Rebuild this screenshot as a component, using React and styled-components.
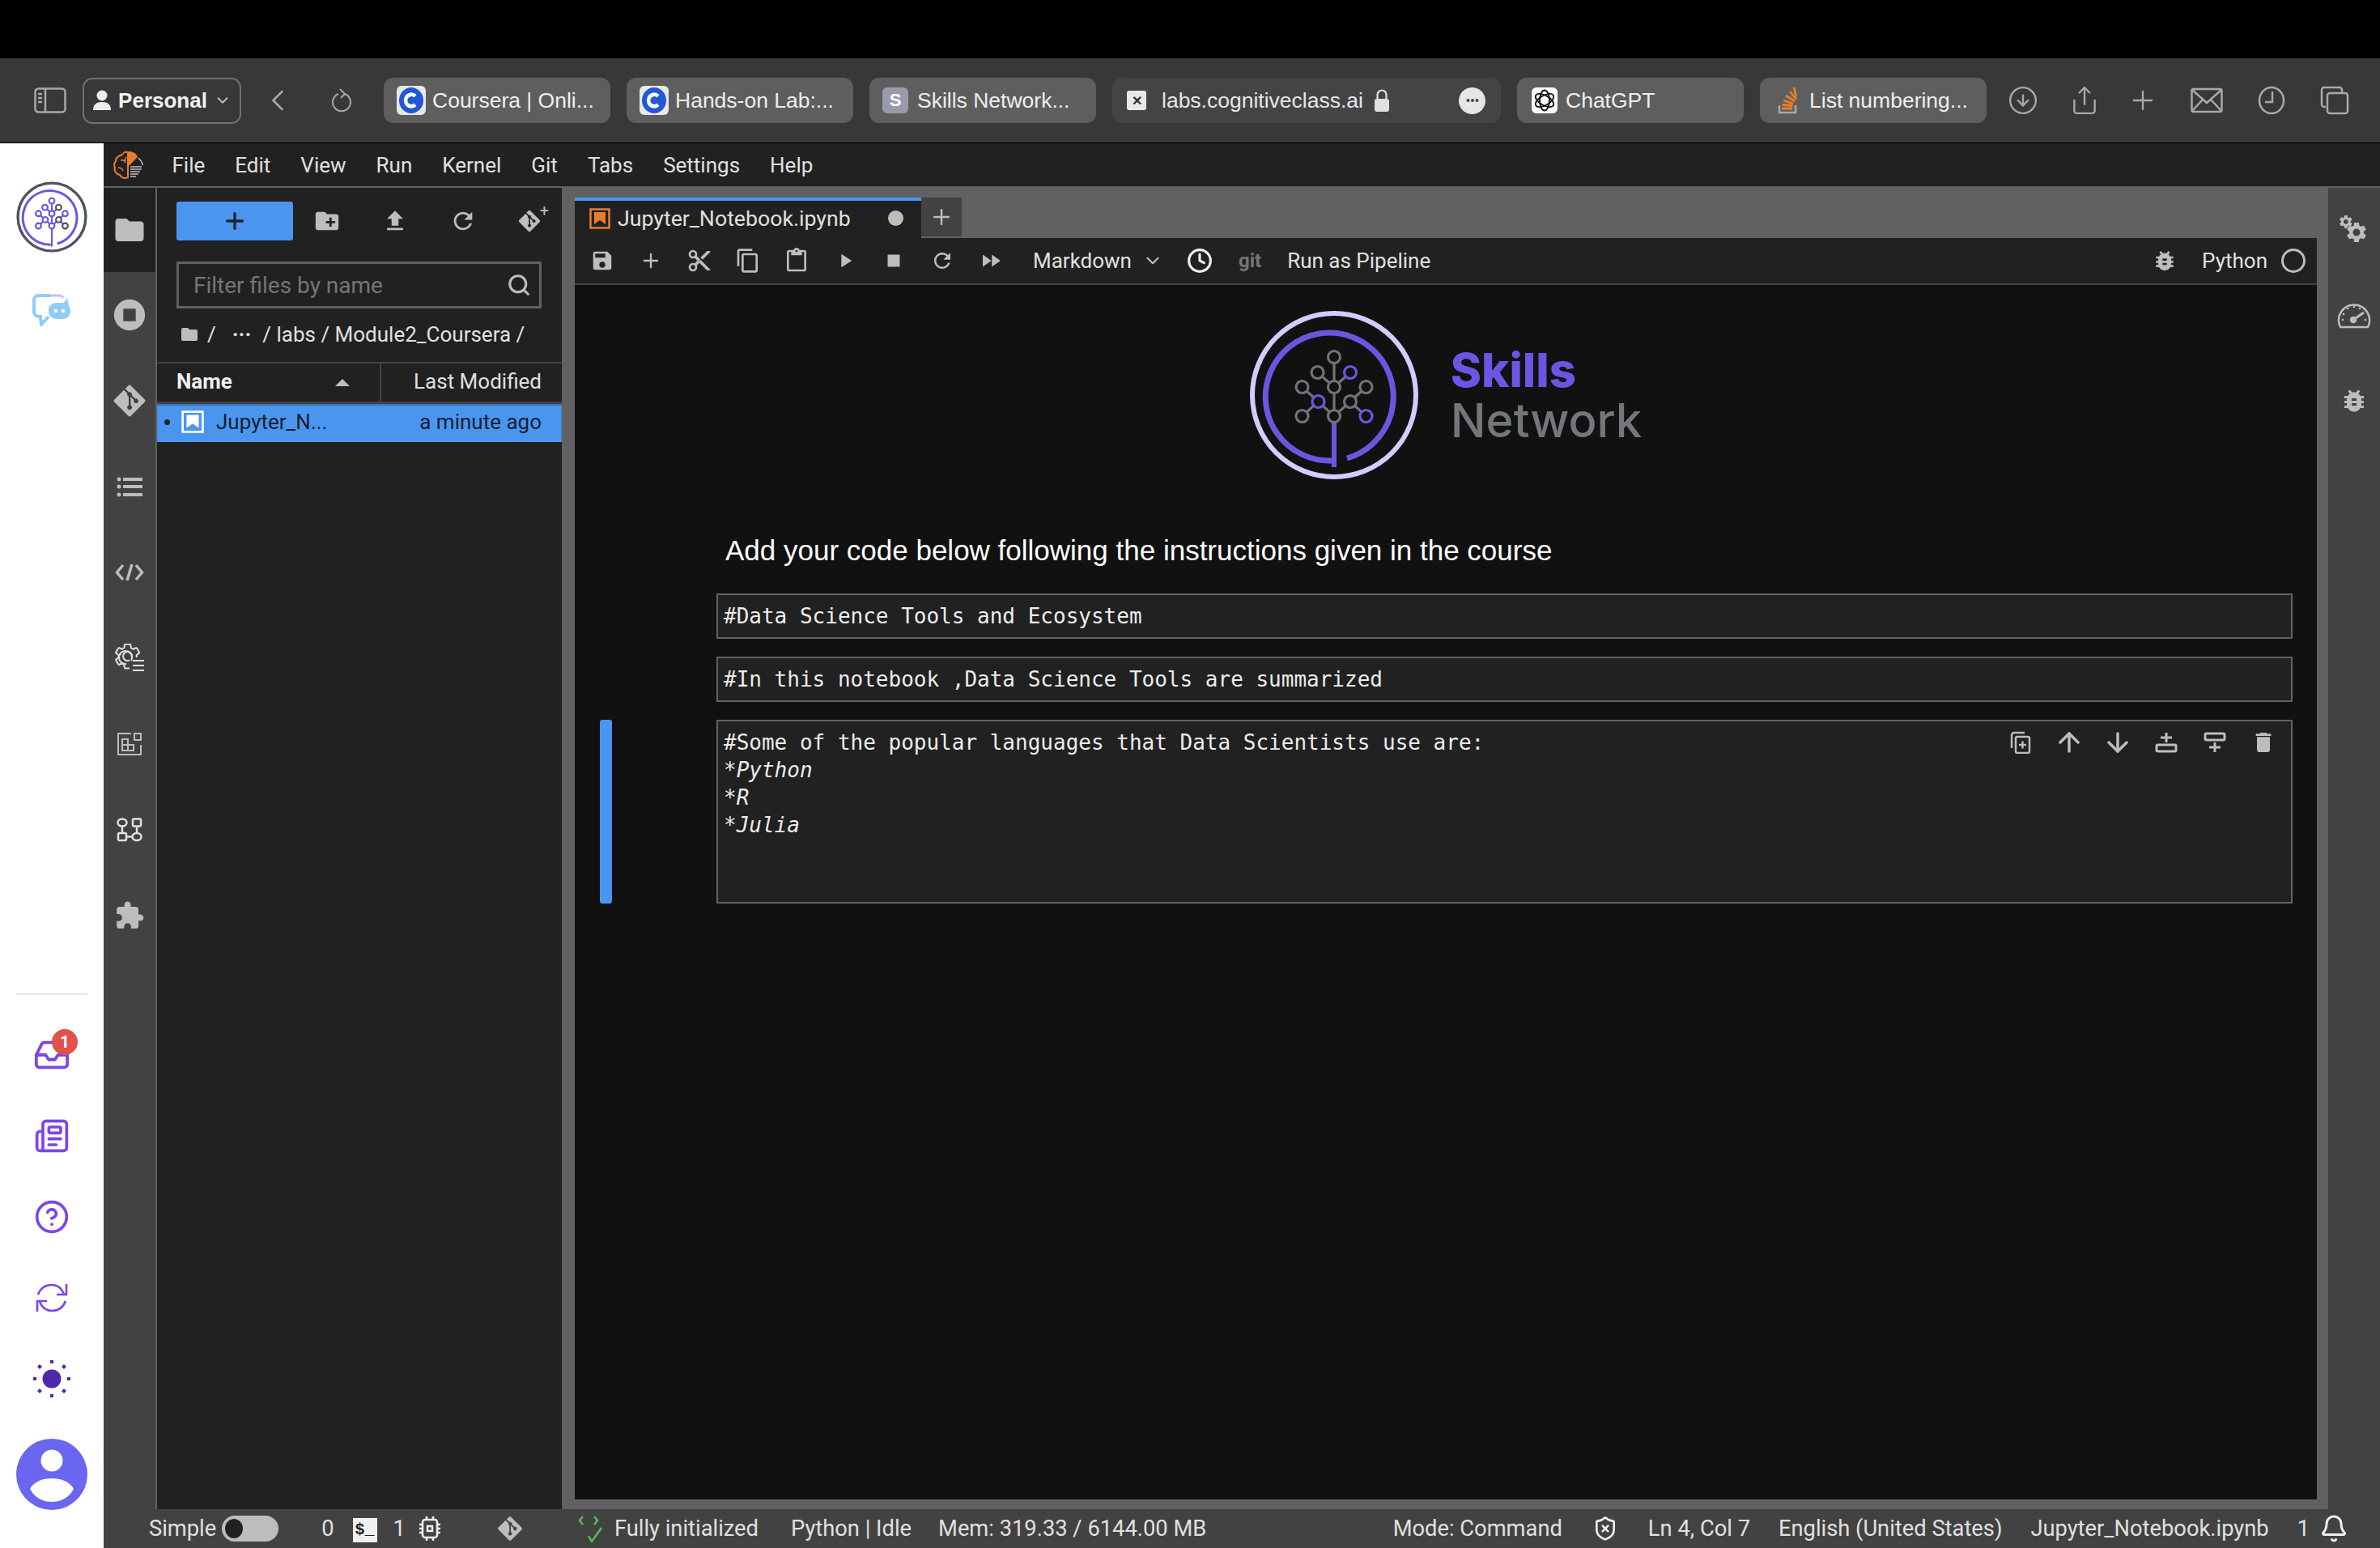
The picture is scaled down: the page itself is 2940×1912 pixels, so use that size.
import React from "react";
import styled, { createGlobalStyle } from "styled-components";
import { FaGitAlt } from "react-icons/fa";
import {
  ArrowDown,
  ArrowUp,
  Bell,
  CircleArrowDown,
  CircleHelp,
  Clock,
  Inbox,
  Newspaper,
  Plus,
  Search,
  Share,
  ShieldX,
  ChevronLeft,
  ChevronDown,
} from "lucide-react";

const LAB_FONT = `Roboto, "Noto Sans", sans-serif`;

const Mat = ({ d, size = 28, color = "#bdbdbd" }) => (
  <svg width={size} height={size} viewBox="0 0 24 24" fill={color}>
    <path d={d} />
  </svg>
);

const paths = {
  folder: "M10 4H4c-1.1 0-1.99.9-1.99 2L2 18c0 1.1.9 2 2 2h16c1.1 0 2-.9 2-2V8c0-1.1-.9-2-2-2h-8l-2-2z",
  newFolder: "M20 6h-8l-2-2H4c-1.11 0-1.99.89-1.99 2L2 18c0 1.11.89 2 2 2h16c1.11 0 2-.89 2-2V8c0-1.11-.89-2-2-2zm-1 8h-3v3h-2v-3h-3v-2h3V9h2v3h3v2z",
  upload: "M9 16h6v-6h4l-7-7-7 7h4zm-4 2h14v2H5z",
  refresh: "M17.65 6.35C16.2 4.9 14.21 4 12 4c-4.42 0-7.99 3.58-7.99 8s3.57 8 7.99 8c3.73 0 6.84-2.55 7.73-6h-2.08c-.82 2.33-3.04 4-5.65 4-3.31 0-6-2.69-6-6s2.69-6 6-6c1.66 0 3.14.69 4.22 1.78L13 11h7V4l-2.35 2.35z",
  save: "M17 3H5c-1.11 0-2 .9-2 2v14c0 1.1.89 2 2 2h14c1.1 0 2-.9 2-2V7l-4-4zm-5 16c-1.66 0-3-1.34-3-3s1.34-3 3-3 3 1.34 3 3-1.34 3-3 3zm3-10H5V5h10v4z",
  cut: "M9.64 7.64c.23-.5.36-1.05.36-1.64 0-2.21-1.79-4-4-4S2 3.79 2 6s1.79 4 4 4c.59 0 1.14-.13 1.64-.36L10 12l-2.36 2.36C7.14 14.13 6.59 14 6 14c-2.21 0-4 1.79-4 4s1.79 4 4 4 4-1.79 4-4c0-.59-.13-1.14-.36-1.64L12 14l7 7h3v-1L9.64 7.64zM6 8c-1.1 0-2-.89-2-2s.9-2 2-2 2 .89 2 2-.9 2-2 2zm0 12c-1.1 0-2-.89-2-2s.9-2 2-2 2 .89 2 2-.9 2-2 2zm6-7.5c-.28 0-.5-.22-.5-.5s.22-.5.5-.5.5.22.5.5-.22.5-.5.5zM19 3l-6 6 2 2 7-7V3h-3z",
  copy: "M16 1H4c-1.1 0-2 .9-2 2v14h2V3h12V1zm3 4H8c-1.1 0-2 .9-2 2v14c0 1.1.9 2 2 2h11c1.1 0 2-.9 2-2V7c0-1.1-.9-2-2-2zm0 16H8V7h11v14z",
  paste: "M19 2h-4.18C14.4.84 13.3 0 12 0c-1.3 0-2.4.84-2.82 2H5c-1.1 0-2 .9-2 2v16c0 1.1.9 2 2 2h14c1.1 0 2-.9 2-2V4c0-1.1-.9-2-2-2zm-7 0c.55 0 1 .45 1 1s-.45 1-1 1-1-.45-1-1 .45-1 1-1zm7 18H5V4h2v3h10V4h2v16z",
  play: "M8 5v14l11-7z",
  stop: "M6 6h12v12H6z",
  forward: "M4 18l8.5-6L4 6v12zm9-12v12l8.5-6L13 6z",
  extension: "M20.5 11H19V7c0-1.1-.9-2-2-2h-4V3.5C13 2.12 11.88 1 10.5 1S8 2.12 8 3.5V5H4c-1.1 0-1.99.9-1.99 2v3.8H3.5c1.49 0 2.7 1.21 2.7 2.7s-1.21 2.7-2.7 2.7H2V20c0 1.1.9 2 2 2h3.8v-1.5c0-1.49 1.21-2.7 2.7-2.7 1.49 0 2.7 1.21 2.7 2.7V22H17c1.1 0 2-.9 2-2v-4h1.5c1.38 0 2.5-1.12 2.5-2.5S21.88 11 20.5 11z",
  bug: "M20 8h-2.81c-.45-.78-1.07-1.45-1.82-1.96L17 4.41 15.59 3l-2.17 2.17C12.96 5.06 12.49 5 12 5c-.49 0-.96.06-1.41.17L8.41 3 7 4.41l1.62 1.63C7.88 6.55 7.26 7.22 6.81 8H4v2h2.09c-.05.33-.09.66-.09 1v1H4v2h2v1c0 .34.04.67.09 1H4v2h2.81c1.04 1.79 2.97 3 5.19 3s4.15-1.21 5.19-3H20v-2h-2.09c.05-.33.09-.66.09-1v-1h2v-2h-2v-1c0-.34-.04-.67-.09-1H20V8zm-6 8h-4v-2h4v2zm0-4h-4v-2h4v2z",
  stopCircle: "M12 2a10 10 0 1 0 0 20 10 10 0 0 0 0-20zm4 14H8V8h8v8z",
  trash: "M6 19c0 1.1.9 2 2 2h8c1.1 0 2-.9 2-2V7H6v12zM19 4h-3.5l-1-1h-5l-1 1H5v2h14V4z",
  gear: "M19.14 12.94c.04-.3.06-.61.06-.94 0-.32-.02-.64-.07-.94l2.03-1.58c.18-.14.23-.41.12-.61l-1.92-3.32c-.12-.22-.37-.29-.59-.22l-2.39.96c-.5-.38-1.03-.7-1.62-.94l-.36-2.54c-.04-.24-.24-.41-.48-.41h-3.84c-.24 0-.43.17-.47.41l-.36 2.54c-.59.24-1.13.57-1.62.94l-2.39-.96c-.22-.08-.47 0-.59.22L2.74 8.87c-.12.21-.08.47.12.61l2.03 1.58c-.05.3-.09.63-.09.94s.02.64.07.94l-2.03 1.58c-.18.14-.23.41-.12.61l1.92 3.32c.12.22.37.29.59.22l2.39-.96c.5.38 1.03.7 1.62.94l.36 2.54c.05.24.24.41.48.41h3.84c.24 0 .44-.17.47-.41l.36-2.54c.59-.24 1.13-.56 1.62-.94l2.39.96c.22.08.47 0 .59-.22l1.92-3.32c.12-.22.07-.47-.12-.61l-2.01-1.58zM12 15.6c-1.98 0-3.6-1.62-3.6-3.6s1.62-3.6 3.6-3.6 3.6 1.62 3.6 3.6-1.62 3.6-3.6 3.6z",
};

const SidebarIcon = () => (
  <svg width="40" height="32" viewBox="0 0 40 32" fill="none" stroke="#a8a8a8" strokeWidth="2.5">
    <rect x="1.5" y="1.5" width="37" height="29" rx="4" />
    <path d="M14 2v28M5 8h5M5 13h5M5 18h5" />
  </svg>
);

const PersonIcon = () => (
  <svg width="24" height="30" viewBox="0 0 24 30" fill="#eee">
    <circle cx="12" cy="9" r="6.5" />
    <path d="M1 27c0-7 4-10 11-10s11 3 11 10z" />
  </svg>
);

const CourseraIcon = () => (
  <FaviconBox>
    <svg width="30" height="32" viewBox="0 0 30 30" preserveAspectRatio="none">
      <circle cx="15" cy="15" r="15" fill="#2257d6" />
      <path d="M20 10a7 7 0 1 0 0 10" fill="none" stroke="#fff" strokeWidth="4.5" />
    </svg>
  </FaviconBox>
);

const OpenAiKnot = () => (
  <svg width="28" height="28" viewBox="0 0 28 28" fill="none" stroke="#111" strokeWidth="1.8">
    <ellipse cx="14" cy="14" rx="6" ry="12.5" />
    <ellipse cx="14" cy="14" rx="6" ry="12.5" transform="rotate(60 14 14)" />
    <ellipse cx="14" cy="14" rx="6" ry="12.5" transform="rotate(120 14 14)" />
  </svg>
);

const StackIcon = () => (
  <svg width="24" height="34" viewBox="0 0 24 34" fill="none">
    <path d="M2 23v9h20v-9" stroke="#a9a9a9" strokeWidth="2.5" />
    <path d="M5 27h13M5.500 22.500l13 1M7 17l12 4M10 11l11 7M15 6l8 10M20 1l3 12" stroke="#e8812a" strokeWidth="2.8" />
  </svg>
);

const LockIcon = () => (
  <svg width="20" height="28" viewBox="0 0 20 28" fill="none">
    <rect x="1" y="12" width="18" height="16" rx="3" fill="#e0e0e0" />
    <path d="M4.500 13V7a5.500 5.500 0 0 1 11 0v6" stroke="#e0e0e0" strokeWidth="2.200" />
  </svg>
);

const DotsIcon = () => (
  <svg width="16" height="6" viewBox="0 0 16 6" fill="#444">
    <circle cx="2.500" cy="3" r="2" />
    <circle cx="8" cy="3" r="2" />
    <circle cx="13.500" cy="3" r="2" />
  </svg>
);

const MailIcon = () => (
  <svg width="40" height="32" viewBox="0 0 40 32" fill="none" stroke="#a8a8a8" strokeWidth="2.5">
    <rect x="1.500" y="2" width="37" height="28" rx="2" />
    <path d="M2 3l18 16L38 3M2 29l13-14M38 29L25 15" />
  </svg>
);

const TabsIcon = () => (
  <svg width="36" height="36" viewBox="0 0 36 36" fill="none" stroke="#a8a8a8" strokeWidth="2.5">
    <path d="M7 26H5a3 3 0 0 1-3-3V5a3 3 0 0 1 3-3h19a3 3 0 0 1 3 3v3" />
    <rect x="9" y="9" width="25" height="25" rx="3" />
  </svg>
);

const HistoryIcon = () => (
  <svg width="34" height="36" viewBox="0 0 34 36" fill="none" stroke="#a8a8a8" strokeWidth="2.5">
    <ellipse cx="17" cy="18" rx="15" ry="16" />
    <path d="M18 7v13H9" />
  </svg>
);

const ReloadIcon = () => (
  <svg width="26" height="32" viewBox="0 0 26 32" fill="none" stroke="#a8a8a8" strokeWidth="2">
    <path d="M17 8a11 11 0 1 1-8 0" />
    <path d="M11 2l6 6-5 5" />
  </svg>
);

const Tree = () => {
  const grey = "#6f7276";
  const violet = "#6c56e0";
  const nodes = [
    [0, -73, grey], [-20.500, -54, grey], [20, -54, violet], [-39.500, -36, grey], [0, -36, grey],
    [39.500, -36, grey], [-19.500, -18, violet], [20, -18, grey], [-39.500, 0, grey], [0, 0, grey], [39.500, 0, violet],
  ];
  return (
    <g transform="translate(104 130)" fill="none" strokeWidth="3.2">
      <path stroke={grey} d="M0-66V-8M0-36L-20.500-54M0-36L20-54M-39.500-36L-19.500-18L0 0M39.500-36L20-18L0 0M-39.500 0L-19.500-18M20-18L39.500 0" />
      <path stroke={violet} d="M0 8V63" strokeWidth="6" />
      {nodes.map(([x, y, c]) => (
        <circle key={`${x}${y}`} cx={x} cy={y} r="7.500" stroke={c} fill="#111" />
      ))}
    </g>
  );
};

const LogoMark = () => (
  <svg width="208" height="208" viewBox="0 0 208 208">
    <circle cx="104" cy="104" r="101" fill="#111" stroke="#d4ccff" strokeWidth="6" />
    <path d="M101 185A79 79 0 1 1 120 182" fill="none" stroke="#6c56e0" strokeWidth="7" />
    <Tree />
  </svg>
);

const RailLogo = () => (
  <svg width="88" height="88" viewBox="0 0 208 208">
    <circle cx="104" cy="104" r="99" fill="#fff" stroke="#4b5563" strokeWidth="8" />
    <path d="M101 185A79 79 0 1 1 120 182" fill="none" stroke="#6c56e0" strokeWidth="7" />
    <g transform="translate(104 130)" fill="none" stroke="#6c56e0" strokeWidth="5">
      <path d="M0-66V60M0-36L-20-54M0-36L20-54M-39-36L0 0M39-36L0 0M-39 0L-19-18M20-18L39 0" />
      {[[0, -73], [-20, -54], [20, -54], [-39, -36], [0, -36], [39, -36], [-19, -18], [20, -18], [-39, 0], [0, 0], [39, 0]].map(([x, y]) => (
        <circle key={`${x}${y}`} cx={x} cy={y} r="8" fill="#fff" stroke={x === 20 || (x === 39 && y === 0) ? "#4b5563" : "#6c56e0"} />
      ))}
    </g>
  </svg>
);

const BotIcon = () => (
  <svg width="48" height="40" viewBox="0 0 48 40" fill="none">
    <path d="M22 2H8a6 6 0 0 0-6 6v14a6 6 0 0 0 6 6h2l1 10 9-10" stroke="#90cdf4" strokeWidth="4" />
    <path d="M22 2h12a6 6 0 0 1 4 3" stroke="#c7c0f7" strokeWidth="3" />
    <rect x="20" y="11" width="27" height="20" rx="9" fill="#90cdf4" />
    <path d="M38 12l5-7 2 9z" fill="#90cdf4" />
    <circle cx="29" cy="21" r="2.200" fill="#fff" />
    <circle cx="38" cy="21" r="2.200" fill="#fff" />
  </svg>
);

const SyncIcon = () => (
  <svg width="40" height="38" viewBox="0 0 40 38" fill="none" stroke="#7c45ea" strokeWidth="2.600">
    <path d="M3 15C6 7 12 3 20 3c7 0 12 4 15 11" />
    <path d="M38 2v13H26" />
    <path d="M37 23c-3 8-9 12-17 12-7 0-12-4-15-11" />
    <path d="M2 36V23h12" />
  </svg>
);

const SunIcon = () => (
  <svg width="46" height="46" viewBox="0 0 46 46" fill="#5227b0">
    <circle cx="23" cy="23" r="11.500" />
    <path d="M21 0h4v4h-4zM21 42h4v4h-4zM0 21h4v4H0zM42 21h4v4h-4zM8 5l3 3-3 3-3-3zM38 5l3 3-3 3-3-3zM8 35l3 3-3 3-3-3zM38 35l3 3-3 3-3-3z" />
  </svg>
);

const AvatarIcon = () => (
  <svg width="88" height="88" viewBox="0 0 88 88">
    <circle cx="44" cy="44" r="44" fill="#6a66f0" />
    <circle cx="44" cy="27" r="13.500" fill="#fff" />
    <path d="M17 62c5-9 15-13 27-13s22 4 27 13c-5 10-15 16-27 16s-22-6-27-16z" fill="#fff" />
  </svg>
);

const JupyterLogo = () => (
  <svg width="38" height="36" viewBox="0 0 38 36">
    <path d="M18 2a7 7 0 0 0-8 4 7 7 0 0 0-7 7 7 7 0 0 0-1 8 7 7 0 0 0 6 9 7 7 0 0 0 10 3z" fill="none" stroke="#e67e32" strokeWidth="2" />
    <path d="M9 12c3-1 5 0 6 3M6 21c3 0 5 1 6 4M16 8c-2 2-2 3-1 5" fill="none" stroke="#e67e32" strokeWidth="1.500" />
    <path d="M19 1c5 0 9 2 11 7L19 19z" fill="#e67e32" />
    <path d="M21 20h14M21 23h14M21 26h12M21 29h10M21 32h7" stroke="#bdbdbd" strokeWidth="1.500" />
    <path d="M31 9c3 3 5 6 5 9" stroke="#bdbdbd" strokeWidth="1.500" fill="none" />
  </svg>
);

const NotebookIcon = ({ color, bg, size = 26 }) => (
  <svg width={size} height={size} viewBox="0 0 26 26">
    <rect x="1.500" y="1.500" width="23" height="23" fill={bg} stroke={color} strokeWidth="2.500" />
    <path d="M6 5h14v15l-7-5-7 5z" fill={color} />
  </svg>
);

const ListIcon = () => (
  <svg width="32" height="28" viewBox="0 0 32 28" fill="#bdbdbd">
    <circle cx="3" cy="5" r="2.500" /><circle cx="3" cy="14" r="2.500" /><circle cx="3" cy="24" r="2.500" />
    <path d="M8 3h24v4H8zM8 12h24v4H8zM8 22h24v4H8z" />
  </svg>
);

const CodeIcon = () => (
  <svg width="36" height="24" viewBox="0 0 36 24" fill="none" stroke="#bdbdbd" strokeWidth="3.500">
    <path d="M10 3L2.500 12 10 21M26 3l7.500 9L26 21" />
    <path d="M21 2l-6 20" />
  </svg>
);

const GearListIcon = () => (
  <svg width="38" height="36" viewBox="0 0 38 36" fill="none" stroke="#e0e0e0">
    <path d={paths.gear} transform="translate(-2 -3) scale(1.55)" strokeWidth="1.300" />
    <rect x="19" y="17" width="19" height="19" fill="#424242" stroke="none" />
    <path d="M21 21a8 8 0 1 0-6 4" strokeWidth="2" fill="none" />
    <path d="M23 21h14M23 27h14M23 33h14" strokeWidth="2.200" />
  </svg>
);

const PropertyIcon = () => (
  <svg width="32" height="30" viewBox="0 0 32 30" fill="none" stroke="#bdbdbd" strokeWidth="2">
    <path d="M18 2H2v26h28V16" />
    <rect x="22" y="2" width="8" height="8" />
    <path d="M7 9h7v7h7v7H7zM7 16h7v7" />
  </svg>
);

const GraphIcon = () => (
  <svg width="32" height="30" viewBox="0 0 32 30" fill="none" stroke="#e0e0e0" strokeWidth="2.500">
    <ellipse cx="7" cy="6" rx="5.500" ry="4.500" />
    <rect x="20" y="1.500" width="10" height="9" rx="1.500" />
    <rect x="2" y="19" width="10" height="9" rx="1.500" />
    <ellipse cx="25" cy="23.500" rx="5.500" ry="4.500" />
    <path d="M7 11v8M25 11v8M12 23.500h8" />
  </svg>
);

const GearsIcon = () => (
  <svg width="38" height="38" viewBox="0 0 38 38" fill="#bdbdbd">
    <path d={paths.gear} fillRule="evenodd" transform="translate(-1 -1) scale(.82)" />
    <path d={paths.gear} fillRule="evenodd" transform="translate(7 7) scale(1.250)" />
  </svg>
);

const GaugeIcon = () => (
  <svg width="42" height="36" viewBox="0 0 42 36" fill="none" stroke="#bdbdbd" strokeWidth="2.500">
    <path d="M4 33A19 19 0 1 1 38 33z" />
    <path d="M20 24L33 15" strokeWidth="3" />
    <circle cx="20" cy="24" r="3" fill="#bdbdbd" />
    <g fill="#bdbdbd" stroke="none">
      <circle cx="7" cy="24" r="1.300" /><circle cx="8" cy="17" r="1.300" /><circle cx="13" cy="10" r="1.300" /><circle cx="21" cy="8" r="1.300" />
      <circle cx="28" cy="10" r="1.300" /><circle cx="35" cy="24" r="1.300" />
    </g>
  </svg>
);

const CellCopyIcon = () => (
  <svg width="26" height="28" viewBox="0 0 26 28" fill="none" stroke="#bdbdbd" strokeWidth="2.500">
    <path d="M18 2H5a3 3 0 0 0-3 3v16" />
    <rect x="7" y="7" width="17" height="20" rx="2" />
    <path d="M15.500 12.500v9M11 17h9" />
  </svg>
);

const AddAboveIcon = () => (
  <svg width="28" height="26" viewBox="0 0 28 26" fill="none" stroke="#bdbdbd" strokeWidth="3">
    <path d="M14 1v12M7 7h14" />
    <rect x="2" y="16" width="24" height="8" rx="1.500" />
  </svg>
);

const AddBelowIcon = () => (
  <svg width="28" height="26" viewBox="0 0 28 26" fill="none" stroke="#bdbdbd" strokeWidth="3">
    <rect x="2" y="2" width="24" height="8" rx="1.500" />
    <path d="M14 13v12M7 19h14" />
  </svg>
);

const GitAddIcon = () => (
  <IconWithPlus>
    <FaGitAlt size={30} color="#bdbdbd" />
    <PlusMark>+</PlusMark>
  </IconWithPlus>
);

const CpuIcon = () => (
  <svg width="28" height="30" viewBox="0 0 28 30" fill="none" stroke="#eee" strokeWidth="2.500">
    <rect x="5" y="4" width="18" height="22" rx="3" />
    <rect x="11" y="12" width="6" height="6" />
    <path d="M1 10h4M1 15h4M1 20h4M23 10h4M23 15h4M23 20h4M10 0v4M18 0v4M10 26v4M18 26v4" />
  </svg>
);

const StatusCheck = () => (
  <svg width="32" height="34" viewBox="0 0 32 34" fill="none" stroke="#5cb85c" strokeWidth="2.500">
    <path d="M5 2L1 7l4 5M19 2l4 5-4 5" />
    <path d="M12 26l4 7 12-17" />
  </svg>
);

const menuItems = ["File", "Edit", "View", "Run", "Kernel", "Git", "Tabs", "Settings", "Help"];

const App = () => (
  <Page>
    <GlobalStyle />
    <TopBand />
    <BrowserBar>
      <BarIcon $width={40} $mr={20}><SidebarIcon /></BarIcon>
      <ProfileButton>
        <PersonIcon />
        <span>Personal</span>
        <ChevronDown size={22} color="#bbb" />
      </ProfileButton>
      <BarIcon $width={56} $ml={17}><ChevronLeft size={44} color="#a8a8a8" strokeWidth={1.4} /></BarIcon>
      <BarIcon $width={56} $ml={23} $mr={24}><ReloadIcon /></BarIcon>
      <BrowserTabs>
        <BrowserTab>
          <CourseraIcon />
          <span>Coursera | Onli...</span>
        </BrowserTab>
        <BrowserTab>
          <CourseraIcon />
          <span>Hands-on Lab:...</span>
        </BrowserTab>
        <BrowserTab>
          <SkillsFavicon>S</SkillsFavicon>
          <span>Skills Network...</span>
        </BrowserTab>
        <UrlTab>
          <UrlFavicon>✕</UrlFavicon>
          <UrlText>labs.cognitiveclass.ai</UrlText>
          <LockIcon />
          <MoreDot><DotsIcon /></MoreDot>
        </UrlTab>
        <BrowserTab>
          <OpenAiBox><OpenAiKnot /></OpenAiBox>
          <span>ChatGPT</span>
        </BrowserTab>
        <BrowserTab>
          <StackBox><StackIcon /></StackBox>
          <span>List numbering...</span>
        </BrowserTab>
      </BrowserTabs>
      <BarIcons>
        <BarSlot><CircleArrowDown size={38} color="#a8a8a8" strokeWidth={1.5} /></BarSlot>
        <BarSlot $ml={36}><Share size={38} color="#a8a8a8" strokeWidth={1.5} /></BarSlot>
        <BarSlot $ml={32}><Plus size={38} color="#a8a8a8" strokeWidth={1.5} /></BarSlot>
        <BarSlot $ml={39}><MailIcon /></BarSlot>
        <BarSlot $ml={40}><HistoryIcon /></BarSlot>
        <BarSlot $ml={38}><TabsIcon /></BarSlot>
      </BarIcons>
    </BrowserBar>
    <Body>
      <WhiteRail>
        <RailLogo />
        <BotSlot><BotIcon /></BotSlot>
        <RailBottom>
          <RailDivider />
          <RailSlot>
            <Inbox size={46} color="#7c45ea" strokeWidth={2} />
            <Badge>1</Badge>
          </RailSlot>
          <RailSlot><Newspaper size={44} color="#7c45ea" strokeWidth={2} /></RailSlot>
          <RailSlot><CircleHelp size={44} color="#7c45ea" strokeWidth={2} /></RailSlot>
          <RailSlot><SyncIcon /></RailSlot>
          <RailSlot><SunIcon /></RailSlot>
          <AvatarSlot><AvatarIcon /></AvatarSlot>
        </RailBottom>
      </WhiteRail>
      <Lab>
        <MenuBar>
          <LabLogo><JupyterLogo /></LabLogo>
          {menuItems.map((item) => (
            <MenuItem key={item}>{item}</MenuItem>
          ))}
        </MenuBar>
        <Middle>
          <ActivityBar>
            <ActivityItem $active $height={104}><Mat d={paths.folder} size={42} /></ActivityItem>
            <ActivityItem><Mat d={paths.stopCircle} size={46} /></ActivityItem>
            <ActivityItem><FaGitAlt size={44} color="#bdbdbd" /></ActivityItem>
            <ActivityItem><ListIcon /></ActivityItem>
            <ActivityItem><CodeIcon /></ActivityItem>
            <ActivityItem><GearListIcon /></ActivityItem>
            <ActivityItem><PropertyIcon /></ActivityItem>
            <ActivityItem><GraphIcon /></ActivityItem>
            <ActivityItem><Mat d={paths.extension} size={38} /></ActivityItem>
          </ActivityBar>
          <FilePanel>
            <FileToolbar>
              <NewButton><Plus size={32} color="#1c2530" strokeWidth={2.5} /></NewButton>
              <ToolSlot $width={84}><Mat d={paths.newFolder} size={34} /></ToolSlot>
              <ToolSlot $width={84}><Mat d={paths.upload} size={34} /></ToolSlot>
              <ToolSlot $width={84}><Mat d={paths.refresh} size={34} /></ToolSlot>
              <ToolSlot $width={80}><GitAddIcon /></ToolSlot>
            </FileToolbar>
            <FilterBox>
              <FilterText>Filter files by name</FilterText>
              <Search size={30} color="#bdbdbd" strokeWidth={2.5} />
            </FilterBox>
            <Breadcrumbs>
              <Mat d={paths.folder} size={24} />
              <span>/</span>
              <Ellipsis>···</Ellipsis>
              <span>/ labs / Module2_Coursera /</span>
            </Breadcrumbs>
            <ListHeader>
              <NameColumn>
                <span>Name</span>
                <Caret />
              </NameColumn>
              <ModifiedColumn>Last Modified</ModifiedColumn>
            </ListHeader>
            <FileRow>
              <RunDot />
              <NotebookIcon color="#fff" bg="#4a96ee" size={28} />
              <FileName>Jupyter_N...</FileName>
              <FileDate>a minute ago</FileDate>
            </FileRow>
          </FilePanel>
          <MainArea>
            <TabStrip>
              <NotebookTab>
                <NotebookIcon color="#e67e32" bg="#212121" size={26} />
                <TabLabel>Jupyter_Notebook.ipynb</TabLabel>
                <DirtyDot />
              </NotebookTab>
              <AddTab><Plus size={30} color="#bdbdbd" strokeWidth={2} /></AddTab>
            </TabStrip>
            <Toolbar>
              <ToolSlot $width={60}><Mat d={paths.save} size={30} /></ToolSlot>
              <ToolSlot $width={60}><Plus size={28} color="#bdbdbd" strokeWidth={2} /></ToolSlot>
              <ToolSlot $width={60}><Mat d={paths.cut} size={32} /></ToolSlot>
              <ToolSlot $width={60}><Mat d={paths.copy} size={32} /></ToolSlot>
              <ToolSlot $width={60}><Mat d={paths.paste} size={32} /></ToolSlot>
              <ToolSlot $width={60}><Mat d={paths.play} size={28} /></ToolSlot>
              <ToolSlot $width={60}><Mat d={paths.stop} size={30} /></ToolSlot>
              <ToolSlot $width={60}><Mat d={paths.refresh} size={30} /></ToolSlot>
              <ToolSlot $width={60}><Mat d={paths.forward} size={30} /></ToolSlot>
              <ToolLabel $ml={22}>Markdown</ToolLabel>
              <ChevronSlot><ChevronDown size={26} color="#bdbdbd" /></ChevronSlot>
              <ToolSlot $width={60} $ml={15}><Clock size={32} color="#eee" strokeWidth={2.4} /></ToolSlot>
              <GitLabel>git</GitLabel>
              <ToolLabel $ml={32}>Run as Pipeline</ToolLabel>
              <ToolbarRight>
                <Mat d={paths.bug} size={32} />
                <ToolLabel $ml={30}>Python</ToolLabel>
                <KernelCircle />
              </ToolbarRight>
            </Toolbar>
            <Notebook>
              <LogoRow>
                <LogoMark />
                <LogoText>
                  <SkillsWord>Skills</SkillsWord>
                  <NetworkWord>Network</NetworkWord>
                </LogoText>
              </LogoRow>
              <Heading>Add your code below following the instructions given in the course</Heading>
              <CellRow>
                <Collapser />
                <Cell>#Data Science Tools and Ecosystem</Cell>
              </CellRow>
              <CellRow>
                <Collapser />
                <Cell>#In this notebook ,Data Science Tools are summarized</Cell>
              </CellRow>
              <CellRow>
                <Collapser $active />
                <Cell $tall>
                  #Some of the popular languages that Data Scientists use are:
                  <ItalicLine>*Python</ItalicLine>
                  <ItalicLine>*R</ItalicLine>
                  <ItalicLine>*Julia</ItalicLine>
                  <CellTools>
                    <CellTool><CellCopyIcon /></CellTool>
                    <CellTool><ArrowUp size={38} color="#bdbdbd" strokeWidth={2.2} /></CellTool>
                    <CellTool><ArrowDown size={38} color="#bdbdbd" strokeWidth={2.2} /></CellTool>
                    <CellTool><AddAboveIcon /></CellTool>
                    <CellTool><AddBelowIcon /></CellTool>
                    <CellTool><Mat d={paths.trash} size={32} /></CellTool>
                  </CellTools>
                </Cell>
              </CellRow>
            </Notebook>
          </MainArea>
          <RightBar>
            <ActivityItem $height={104}><GearsIcon /></ActivityItem>
            <ActivityItem><GaugeIcon /></ActivityItem>
            <ActivityItem><Mat d={paths.bug} size={36} /></ActivityItem>
          </RightBar>
        </Middle>
        <StatusBar>
          <StatusItem $ml={56}>Simple</StatusItem>
          <Toggle $ml={7}><ToggleKnob /></Toggle>
          <StatusItem $ml={53}>0</StatusItem>
          <TerminalBox>$_</TerminalBox>
          <StatusItem $ml={20}>1</StatusItem>
          <StatusItem $ml={16}><CpuIcon /></StatusItem>
          <StatusItem $ml={68}><FaGitAlt size={34} color="#bdbdbd" /></StatusItem>
          <StatusItem $ml={68}><StatusCheck /></StatusItem>
          <StatusItem $ml={12}>Fully initialized</StatusItem>
          <StatusItem $ml={40}>Python | Idle</StatusItem>
          <StatusItem $ml={33}>Mem: 319.33 / 6144.00 MB</StatusItem>
          <StatusRight>
            <StatusItem>Mode: Command</StatusItem>
            <StatusItem $ml={37}><ShieldX size={32} color="#eee" strokeWidth={2} /></StatusItem>
            <StatusItem $ml={37}>Ln 4, Col 7</StatusItem>
            <StatusItem $ml={35}>English (United States)</StatusItem>
            <StatusItem $ml={35}>Jupyter_Notebook.ipynb</StatusItem>
            <StatusItem $ml={35}>1</StatusItem>
            <StatusItem $ml={12}><Bell size={36} color="#eee" strokeWidth={2} /></StatusItem>
          </StatusRight>
        </StatusBar>
      </Lab>
    </Body>
  </Page>
);

const GlobalStyle = createGlobalStyle`
  html, body {
    margin: 0;
    padding: 0;
    background: #000;
  }
  * {
    box-sizing: border-box;
  }
`;

const Page = styled.div`
  width: 2940px;
  height: 1912px;
  display: flex;
  flex-direction: column;
  overflow: hidden;
  font-family: ${LAB_FONT};
`;

const TopBand = styled.div`
  height: 72px;
  background: #000;
  flex: none;
`;

const BrowserBar = styled.div`
  height: 105px;
  flex: none;
  background: #383838;
  border-bottom: 1px solid #000;
  display: flex;
  align-items: center;
  padding-left: 42px;
  font-family: "Liberation Sans", sans-serif;
`;

const BarIcon = styled.div`
  flex: none;
  width: ${(p) => p.$width}px;
  margin-left: ${(p) => p.$ml || 0}px;
  margin-right: ${(p) => p.$mr || 0}px;
  display: flex;
  justify-content: center;
`;

const ProfileButton = styled.div`
  width: 196px;
  height: 57px;
  flex: none;
  border: 2px solid #707070;
  border-radius: 12px;
  display: flex;
  align-items: center;
  justify-content: center;
  gap: 8px;
  color: #f2f2f2;
  font-size: 26px;
  font-weight: 700;
`;

const BrowserTabs = styled.div`
  display: flex;
  gap: 20px;
  flex: none;
`;

const BrowserTab = styled.div`
  width: 280px;
  height: 56px;
  background: #5e5e5e;
  border-radius: 12px;
  display: flex;
  align-items: center;
  gap: 8px;
  padding-left: 16px;
  color: #eee;
  font-size: 26.500px;
  white-space: nowrap;
`;

const FaviconBox = styled.div`
  width: 36px;
  height: 36px;
  flex: none;
  background: #e8e8e8;
  border-radius: 6px;
  display: flex;
  align-items: center;
  justify-content: center;
`;

const SkillsFavicon = styled.div`
  width: 32px;
  height: 32px;
  flex: none;
  margin-right: 3px;
  background: #9a9aac;
  border-radius: 6px;
  display: flex;
  align-items: center;
  justify-content: center;
  color: #fff;
  font-size: 22px;
  font-weight: 700;
`;

const OpenAiBox = styled.div`
  width: 32px;
  height: 32px;
  flex: none;
  margin: 0 2px;
  background: #fff;
  border-radius: 6px;
  display: flex;
  align-items: center;
  justify-content: center;
`;

const StackBox = styled.div`
  flex: none;
  display: flex;
  margin: 0 7px 0 6px;
`;

const UrlTab = styled.div`
  width: 480px;
  height: 56px;
  background: #444;
  border-radius: 12px;
  display: flex;
  align-items: center;
  padding: 0 19px 0 18px;
  color: #e6e6e6;
  font-size: 26.500px;
`;

const UrlFavicon = styled.div`
  width: 24px;
  height: 24px;
  flex: none;
  background: #e8e8e8;
  border-radius: 3px;
  color: #333;
  font-size: 16px;
  font-weight: 700;
  display: flex;
  align-items: center;
  justify-content: center;
`;

const UrlText = styled.span`
  margin: 0 13px 0 19px;
  white-space: nowrap;
`;

const MoreDot = styled.div`
  margin-left: auto;
  width: 33px;
  height: 33px;
  border-radius: 50%;
  background: #e6e6e6;
  display: flex;
  align-items: center;
  justify-content: center;
`;

const BarIcons = styled.div`
  flex: 1;
  display: flex;
  align-items: center;
  padding-left: 25px;
`;

const BarSlot = styled.div`
  width: 40px;
  flex: none;
  margin-left: ${(p) => p.$ml || 0}px;
  display: flex;
  justify-content: center;
`;

const Body = styled.div`
  flex: 1;
  display: flex;
  min-height: 0;
`;

const WhiteRail = styled.div`
  width: 128px;
  flex: none;
  background: #fff;
  display: flex;
  flex-direction: column;
  align-items: center;
  padding: 47px 0;
`;

const BotSlot = styled.div`
  margin-top: 51px;
`;

const RailBottom = styled.div`
  margin-top: auto;
  display: flex;
  flex-direction: column;
  align-items: center;
`;

const RailDivider = styled.div`
  width: 88px;
  height: 2px;
  background: #e8e8e8;
  margin-bottom: 24px;
`;

const RailSlot = styled.div`
  position: relative;
  height: 100px;
  width: 88px;
  display: flex;
  align-items: center;
  justify-content: center;
`;

const AvatarSlot = styled.div`
  margin-top: 24px;
  height: 88px;
`;

const Badge = styled.div`
  position: absolute;
  left: 44px;
  top: 18px;
  width: 32px;
  height: 32px;
  border-radius: 50%;
  background: #e0534d;
  color: #fff;
  font-size: 20px;
  font-weight: 700;
  display: flex;
  align-items: center;
  justify-content: center;
`;

const Lab = styled.div`
  flex: 1;
  min-width: 0;
  display: flex;
  flex-direction: column;
`;

const MenuBar = styled.div`
  height: 55px;
  flex: none;
  background: #212121;
  border-bottom: 2px solid #616161;
  display: flex;
  align-items: center;
  color: #e0e0e0;
`;

const LabLogo = styled.div`
  width: 66px;
  padding-left: 12px;
  flex: none;
  display: flex;
`;

const MenuItem = styled.span`
  font-size: 26px;
  padding: 0 18.500px;
`;

const Middle = styled.div`
  flex: 1;
  min-height: 0;
  display: flex;
`;

const ActivityBar = styled.div`
  width: 66px;
  flex: none;
  background: #424242;
  border-right: 2px solid #616161;
  display: flex;
  flex-direction: column;
`;

const ActivityItem = styled.div`
  height: ${(p) => p.$height || 106}px;
  flex: none;
  display: flex;
  align-items: center;
  justify-content: center;
  background: ${(p) => (p.$active ? "#212121" : "transparent")};
`;

const FilePanel = styled.div`
  width: 500px;
  flex: none;
  background: #212121;
  color: #e0e0e0;
  display: flex;
  flex-direction: column;
`;

const FileToolbar = styled.div`
  height: 91px;
  flex: none;
  display: flex;
  align-items: center;
  padding: 0 0 10px 24px;
`;

const NewButton = styled.div`
  width: 144px;
  height: 48px;
  flex: none;
  background: #4a96ee;
  border-radius: 3px;
  display: flex;
  align-items: center;
  justify-content: center;
`;

const ToolSlot = styled.div`
  width: ${(p) => p.$width}px;
  margin-left: ${(p) => p.$ml || 0}px;
  flex: none;
  display: flex;
  align-items: center;
  justify-content: center;
`;

const ChevronSlot = styled.div`
  margin-left: 13px;
  display: flex;
`;

const IconWithPlus = styled.div`
  position: relative;
  display: flex;
`;

const PlusMark = styled.span`
  position: absolute;
  right: -9px;
  top: -10px;
  color: #bdbdbd;
  font-size: 20px;
`;

const FilterBox = styled.div`
  width: 451px;
  height: 58px;
  flex: none;
  margin-left: 24px;
  border: 3px solid #616161;
  display: flex;
  align-items: center;
  justify-content: space-between;
  padding: 0 10px 0 18px;
`;

const FilterText = styled.span`
  font-size: 28px;
  color: #757575;
`;

const Breadcrumbs = styled.div`
  height: 66px;
  flex: none;
  display: flex;
  align-items: center;
  gap: 10px;
  padding: 0 0 3px 28px;
  font-size: 26px;
  color: #e0e0e0;
  white-space: nowrap;
`;

const Ellipsis = styled.span`
  margin: 0 4px 0 10px;
  font-size: 26px;
  font-weight: 700;
`;

const ListHeader = styled.div`
  height: 52px;
  flex: none;
  display: flex;
  border-top: 2px solid #424242;
  border-bottom: 3px solid #424242;
  font-size: 26px;
`;

const NameColumn = styled.div`
  width: 277px;
  flex: none;
  display: flex;
  align-items: center;
  justify-content: space-between;
  padding: 0 37px 4px 24px;
  border-right: 2px solid #424242;
  font-weight: 700;
  color: #f0f0f0;
`;

const Caret = styled.div`
  width: 0;
  height: 0;
  margin-top: 4px;
  border-left: 9px solid transparent;
  border-right: 9px solid transparent;
  border-bottom: 9px solid #bdbdbd;
`;

const ModifiedColumn = styled.div`
  flex: 1;
  display: flex;
  align-items: center;
  justify-content: flex-end;
  padding: 0 25px 4px 0;
`;

const FileRow = styled.div`
  height: 47px;
  flex: none;
  background: #4a96ee;
  display: flex;
  align-items: center;
  padding: 0 25px 3px 9px;
  color: #15202e;
  font-size: 26px;
  box-shadow: inset 0 2px 2px rgba(0, 0, 0, 0.25);
`;

const RunDot = styled.div`
  width: 7px;
  height: 7px;
  border-radius: 50%;
  background: #15202e;
  margin-right: 14px;
`;

const FileName = styled.span`
  margin-left: 15px;
`;

const FileDate = styled.span`
  margin-left: auto;
`;

const MainArea = styled.div`
  flex: 1;
  min-width: 0;
  background: #616161;
  display: flex;
  flex-direction: column;
  padding: 12px 14px 12px 16px;
`;

const TabStrip = styled.div`
  height: 50px;
  flex: none;
  display: flex;
`;

const NotebookTab = styled.div`
  width: 428px;
  flex: none;
  background: #212121;
  border-top: 4px solid #4a96ee;
  display: flex;
  align-items: center;
  padding: 0 22px 3px 18px;
  color: #e0e0e0;
`;

const TabLabel = styled.span`
  margin-left: 9px;
  font-size: 26.700px;
`;

const DirtyDot = styled.div`
  margin-left: auto;
  width: 19px;
  height: 19px;
  border-radius: 50%;
  background: #bdbdbd;
`;

const AddTab = styled.div`
  width: 50px;
  height: 48px;
  background: #424242;
  display: flex;
  align-items: center;
  justify-content: center;
`;

const Toolbar = styled.div`
  height: 58px;
  flex: none;
  background: #212121;
  border-bottom: 2px solid #424242;
  display: flex;
  align-items: center;
  padding: 0 14px 0 4px;
  color: #e0e0e0;
`;

const ToolLabel = styled.span`
  margin-left: ${(p) => p.$ml || 0}px;
  font-size: 26px;
  white-space: nowrap;
`;

const GitLabel = styled.span`
  margin-left: 18px;
  font-size: 24px;
  font-weight: 700;
  color: #757575;
`;

const ToolbarRight = styled.div`
  margin-left: auto;
  display: flex;
  align-items: center;
`;

const KernelCircle = styled.div`
  width: 30px;
  height: 30px;
  margin-left: 17px;
  border: 3px solid #bdbdbd;
  border-radius: 50%;
`;

const Notebook = styled.div`
  flex: 1;
  min-height: 0;
  background: #111;
  display: flex;
  flex-direction: column;
  padding-top: 32px;
`;

const LogoRow = styled.div`
  display: flex;
  justify-content: center;
  gap: 40px;
  flex: none;
`;

const LogoText = styled.div`
  display: flex;
  flex-direction: column;
  justify-content: center;
  font-family: Inter, sans-serif;
  font-size: 58px;
  line-height: 62px;
`;

const SkillsWord = styled.span`
  color: #6a55e4;
  font-weight: 800;
`;

const NetworkWord = styled.span`
  color: #73767a;
  font-weight: 500;
`;

const Heading = styled.div`
  margin: 66px 0 32px 186px;
  height: 43px;
  line-height: 43px;
  font-family: "Liberation Sans", sans-serif;
  font-size: 35px;
  color: #fff;
  flex: none;
`;

const CellRow = styled.div`
  display: flex;
  padding: 0 30px 0 31px;
  margin-bottom: 22px;
  flex: none;
`;

const Collapser = styled.div`
  width: 15px;
  flex: none;
  margin-right: 129px;
  border-radius: 3px;
  background: ${(p) => (p.$active ? "#4a96ee" : "transparent")};
`;

const Cell = styled.div`
  position: relative;
  flex: 1;
  min-width: 0;
  height: ${(p) => (p.$tall ? 227 : 56)}px;
  background: #212121;
  border: 2px solid #616161;
  padding: 9px 7px;
  font-family: "DejaVu Sans Mono", monospace;
  font-size: 26px;
  line-height: 34px;
  color: #ececec;
  white-space: pre;
`;

const ItalicLine = styled.div`
  font-style: italic;
`;

const CellTools = styled.div`
  position: absolute;
  top: 0;
  right: 4px;
  height: 52px;
  display: flex;
`;

const CellTool = styled.div`
  width: 60px;
  display: flex;
  align-items: center;
  justify-content: center;
`;

const RightBar = styled.div`
  width: 64px;
  flex: none;
  background: #424242;
  display: flex;
  flex-direction: column;
`;

const StatusBar = styled.div`
  height: 48px;
  flex: none;
  background: #424242;
  display: flex;
  align-items: center;
  color: #e0e0e0;
  font-size: 27.300px;
  white-space: nowrap;
`;

const StatusItem = styled.span`
  margin-left: ${(p) => p.$ml || 0}px;
  display: flex;
  align-items: center;
`;

const Toggle = styled.div`
  width: 70px;
  height: 32px;
  flex: none;
  margin-left: ${(p) => p.$ml || 0}px;
  border-radius: 16px;
  background: #bdbdbd;
  display: flex;
  align-items: center;
  padding-left: 4px;
`;

const ToggleKnob = styled.div`
  width: 22px;
  height: 24px;
  border-radius: 50%;
  background: #212121;
`;

const TerminalBox = styled.div`
  width: 30px;
  height: 30px;
  flex: none;
  margin: 3px 0 0 23px;
  background: #f0f0f0;
  color: #222;
  font-size: 20px;
  font-family: "Liberation Mono", monospace;
  font-weight: 700;
  display: flex;
  align-items: center;
  justify-content: center;
`;

const StatusRight = styled.div`
  margin-left: auto;
  display: flex;
  align-items: center;
  padding-right: 39px;
`;

export default App;
